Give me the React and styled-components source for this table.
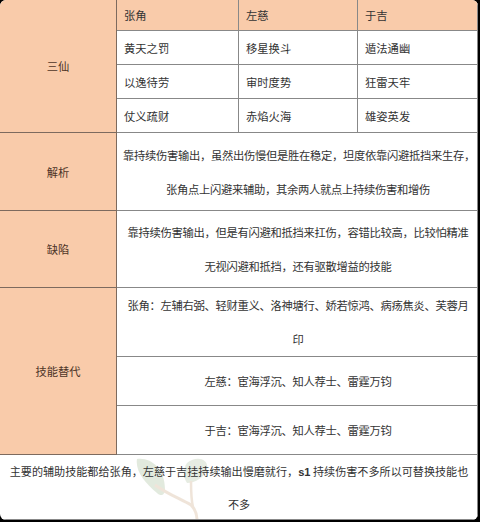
import React from 'react'
import styled, { createGlobalStyle } from 'styled-components'

const GlobalStyle = createGlobalStyle`
    html, body {
        margin: 0;
        padding: 0;
        background: #000;
    }
    body {
        font-family: "Noto Sans CJK SC", "Noto Sans", sans-serif;
    }
`

const Sheet = styled.div`
    position: relative;
    width: 478px;
    height: 520px;
    background: #fff;
    border-radius: 6px;
    overflow: hidden;
    display: grid;
    grid-template-columns: 117px 122px 119px 120px;
    grid-template-rows: 31px 34px 34px 34px 78px 77px 69px 49px 49px 65px;
    color: #333;
    font-size: 11.3px;
`

const Label = styled.div`
    grid-column: 1;
    grid-row: ${p => p.$row};
    background: #f9cbaa;
    color: #4e3528;
    display: flex;
    align-items: center;
    justify-content: center;
    border-right: 1px solid #7d6a5e;
    border-bottom: 1px solid #7d6a5e;
`

const Cell = styled.div`
    background: ${p => (p.$head ? '#f9cbaa' : 'transparent')};
    display: flex;
    align-items: center;
    padding: 0 7px;
    border-right: 1px solid #888;
    border-bottom: 1px solid #888;
    box-sizing: border-box;
`

const Text = styled.div`
    grid-column: 2 / -1;
    display: flex;
    align-items: center;
    justify-content: center;
    padding: 0 4px 0 6px;
    border-right: 1px solid #888;
    border-bottom: 1px solid #888;
    box-sizing: border-box;
    overflow: hidden;

    p {
        margin: 0;
        width: 100%;
        text-align: center;
        line-height: 34px;
        white-space: nowrap;
        letter-spacing: -0.3px;
    }
`

const Note = styled.div`
    grid-column: 1 / -1;
    position: relative;
    display: flex;
    align-items: center;
    padding: 0 4px 0 5px;
    border-right: 1px solid #888;
    border-bottom: 1px solid #888;
    overflow: hidden;
    font-size: 11.1px;

    p {
        position: relative;
        margin: 0;
        width: 100%;
        text-align: center;
        line-height: 32px;
        white-space: nowrap;
    }

    b {
        font-family: "Liberation Sans", sans-serif;
        font-weight: 700;
    }
`

const Leaf = styled.svg`
    position: absolute;
    left: 125px;
    top: 0;
    width: 100px;
    height: 65px;
    opacity: 0.28;
`

const roster = ['张角', '左慈', '于吉']
const skills = [
    ['黄天之罚', '移星换斗', '遁法通幽'],
    ['以逸待劳', '审时度势', '狂雷天牢'],
    ['仗义疏财', '赤焰火海', '雄姿英发'],
]

export default function App() {
    return (
        <>
            <GlobalStyle />
            <Sheet>
                <Label $row="1 / span 4">三仙</Label>
                {roster.map(name => (
                    <Cell key={name} $head>{name}</Cell>
                ))}
                {skills.map(row =>
                    row.map(skill => <Cell key={skill}>{skill}</Cell>)
                )}

                <Label $row="5">解析</Label>
                <Text>
                    <p>
                        靠持续伤害输出，虽然出伤慢但是胜在稳定，坦度依靠闪避抵挡来生存，
                        <br />
                        张角点上闪避来辅助，其余两人就点上持续伤害和增伤
                    </p>
                </Text>

                <Label $row="6">缺陷</Label>
                <Text>
                    <p>
                        靠持续伤害输出，但是有闪避和抵挡来扛伤，容错比较高，比较怕精准
                        <br />
                        无视闪避和抵挡，还有驱散增益的技能
                    </p>
                </Text>

                <Label $row="7 / span 3">技能替代</Label>
                <Text>
                    <p>
                        张角：左辅右弼、轻财重义、洛神塘行、娇若惊鸿、病疡焦炎、芙蓉月
                        <br />
                        印
                    </p>
                </Text>
                <Text>
                    <p>左慈：宦海浮沉、知人荐士、雷霆万钧</p>
                </Text>
                <Text>
                    <p>于吉：宦海浮沉、知人荐士、雷霆万钧</p>
                </Text>

                <Note>
                    <Leaf viewBox="0 0 100 65">
                        <path d="M12 4 C26 2 40 14 40 34 C40 40 36 42 32 38 C20 28 10 16 12 4 Z" fill="#9bb58c" />
                        <path d="M62 8 C72 0 84 4 82 14 C80 22 70 28 62 28 C58 22 58 14 62 8 Z" fill="#a9bd98" />
                        <path d="M30 30 C44 40 56 44 66 50 C70 54 72 60 72 65" stroke="#c8a27a" strokeWidth="3" fill="none" />
                        <path d="M66 26 C66 36 66 44 68 52" stroke="#c8a27a" strokeWidth="2.5" fill="none" />
                    </Leaf>
                    <p>
                        主要的辅助技能都给张角，左慈于吉挂持续输出慢磨就行，<b>s1</b> 持续伤害不多所以可替换技能也
                        <br />
                        不多
                    </p>
                </Note>
            </Sheet>
        </>
    )
}
